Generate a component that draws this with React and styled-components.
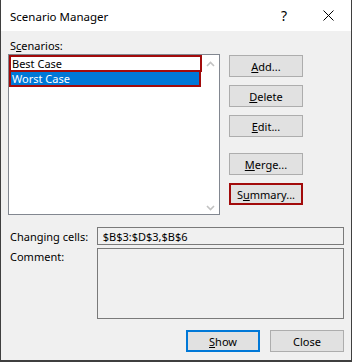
import React from "react";
import styled, { createGlobalStyle } from "styled-components";

const Global = createGlobalStyle`
  html, body { margin: 0; padding: 0; background: #f0f0f0; }
  body { font-family: "Noto Sans", "Open Sans", sans-serif; font-size: 11px; color: #000; }
`;

const Window = styled.div`
  width: 352px;
  height: 362px;
  box-sizing: border-box;
  border: 1px solid #3f3f3f;
  border-top: none;
  border-bottom-width: 2px;
  background: #f0f0f0;
  display: flex;
  flex-direction: column;
`;

const TitleBar = styled.div`
  height: 31px;
  background: #fff;
  display: flex;
  align-items: center;
  padding-left: 9px;
  flex-shrink: 0;
`;

const Title = styled.div`
  flex: 1;
  font-size: 11.5px;
  line-height: 15px;
  margin-top: 1px;
`;

const TitleButton = styled.div`
  width: ${(p) => p.$w}px;
  height: 31px;
  display: flex;
  align-items: center;
  justify-content: center;
  font-size: 14px;
`;

const Body = styled.div`
  flex: 1;
  display: flex;
  flex-direction: column;
  padding: 7px 7px 0 7px;
`;

const TopRow = styled.div`
  display: flex;
  gap: 9px;
`;

const LeftCol = styled.div`
  display: flex;
  flex-direction: column;
`;

const Label = styled.div`
  line-height: 15px;
  padding-left: 2px;
  white-space: nowrap;
`;

const ListBox = styled.div`
  margin-top: 1px;
  width: 212px;
  height: 161px;
  box-sizing: border-box;
  border: 1px solid #828790;
  background: #fff;
  display: flex;
`;

const Items = styled.div`
  flex: 1;
  padding: 2px 2px 0 2px;
  display: flex;
  flex-direction: column;
  gap: 2px;
`;

const Item = styled.div`
  height: 13px;
  line-height: 13px;
  padding-left: 1px;
  margin-right: ${(p) => p.$mr}px;
  outline: 2px solid #a20b0b;
  background: ${(p) => (p.$selected ? "#0078d7" : "#fff")};
  color: ${(p) => (p.$selected ? "#fff" : "#000")};
  white-space: nowrap;
  overflow: hidden;
`;

const ScrollBar = styled.div`
  width: 17px;
  display: flex;
  flex-direction: column;
  justify-content: space-between;
  align-items: center;
  padding: 6px 0 3px;
`;

const BtnCol = styled.div`
  display: flex;
  flex-direction: column;
  padding-top: 17px;
`;

const Button = styled.div`
  width: 74px;
  height: 22px;
  box-sizing: border-box;
  background: #e1e1e1;
  border: ${(p) => (p.$variant === "red" ? "2px solid #a20b0b" : p.$variant === "blue" ? "2px solid #0078d7" : "1px solid #adadad")};
  display: flex;
  align-items: center;
  justify-content: center;
  line-height: 15px;
  margin-top: ${(p) => p.$mt || 0}px;
  white-space: nowrap;
`;

const FieldRow = styled.div`
  display: flex;
  align-items: ${(p) => p.$align || "center"};
  margin-top: ${(p) => p.$mt}px;
`;

const FieldLabel = styled.div`
  width: 89px;
  padding-left: 2px;
  box-sizing: border-box;
  line-height: 15px;
  margin-top: ${(p) => p.$mt || 0}px;
  white-space: nowrap;
`;

const Input = styled.div`
  width: 248px;
  height: ${(p) => p.$h}px;
  box-sizing: border-box;
  border: 1px solid #7a7a7a;
  background: #f0f0f0;
  padding: 0 5px;
  line-height: 15px;
  display: flex;
  align-items: ${(p) => (p.$multi ? "flex-start" : "center")};
`;

const Footer = styled.div`
  display: flex;
  justify-content: flex-end;
  gap: 10px;
  margin-top: 11px;
`;

const Chevron = ({ up }) => (
  <svg width="9" height="6" viewBox="0 0 9 6">
    <path
      d={up ? "M1 5 L4.5 1.5 L8 5" : "M1 1 L4.5 4.5 L8 1"}
      fill="none"
      stroke="#c2c2c2"
      strokeWidth="1.6"
    />
  </svg>
);

export default function App() {
  return (
    <>
      <Global />
      <Window>
        <TitleBar>
          <Title>Scenario Manager</Title>
          <TitleButton $w={42}>?</TitleButton>
          <TitleButton $w={46}>
            <svg width="11" height="11" viewBox="0 0 11 11">
              <path d="M0.5 0.5 L10.5 10.5 M10.5 0.5 L0.5 10.5" stroke="#000" strokeWidth="1" />
            </svg>
          </TitleButton>
        </TitleBar>
        <Body>
          <TopRow>
            <LeftCol>
              <Label>
                S<u>c</u>enarios:
              </Label>
              <ListBox>
                <Items>
                  <Item $mr={0}>Best Case</Item>
                  <Item $mr={1} $selected>
                    Worst Case
                  </Item>
                </Items>
                <ScrollBar>
                  <Chevron up />
                  <Chevron />
                </ScrollBar>
              </ListBox>
            </LeftCol>
            <BtnCol>
              <Button>
                <u>A</u>dd...
              </Button>
              <Button $mt={8}>
                <u>D</u>elete
              </Button>
              <Button $mt={8}>
                <u>E</u>dit...
              </Button>
              <Button $mt={16}>
                <u>M</u>erge...
              </Button>
              <Button $mt={8} $variant="red">
                S<u>u</u>mmary...
              </Button>
            </BtnCol>
          </TopRow>
          <FieldRow $mt={12}>
            <FieldLabel>Changing cells:</FieldLabel>
            <Input $h={18}>$B$3:$D$3,$B$6</Input>
          </FieldRow>
          <FieldRow $mt={3} $align="flex-start">
            <FieldLabel $mt={1}>Comment:</FieldLabel>
            <Input $h={71} $multi />
          </FieldRow>
          <Footer>
            <Button $variant="blue">
              <u>S</u>how
            </Button>
            <Button>Close</Button>
          </Footer>
        </Body>
      </Window>
    </>
  );
}
